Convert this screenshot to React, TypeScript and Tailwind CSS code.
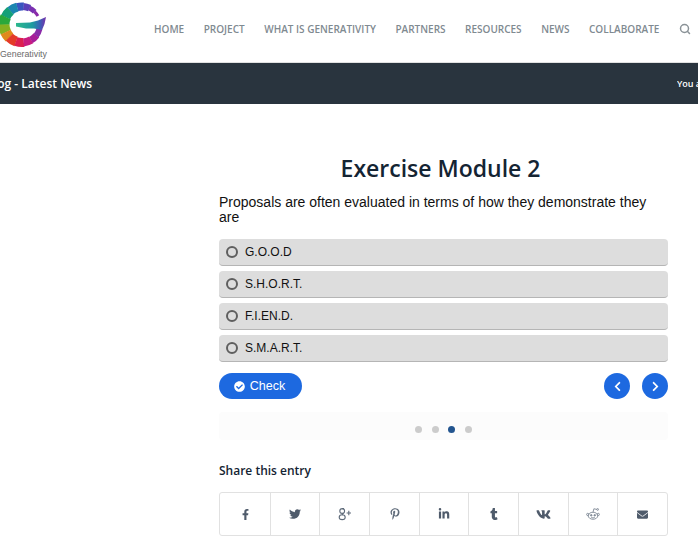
import { FaFacebookF, FaTwitter, FaPinterestP, FaLinkedinIn, FaTumblr, FaVk, FaEnvelope, FaCheckCircle, FaChevronLeft, FaChevronRight } from "react-icons/fa";
import { Search } from "lucide-react";

const nav = ["HOME", "PROJECT", "WHAT IS GENERATIVITY", "PARTNERS", "RESOURCES", "NEWS", "COLLABORATE"];
const options = ["G.O.O.D", "S.H.O.R.T.", "F.I.EN.D.", "S.M.A.R.T."];

const ringStops: [number, number, string, number][] = [
  [-28, -45, "#8a2aa8", 3],
  [-45, -65, "#7a30b0", 5],
  [-65, -85, "#5a40b8", 7],
  [-85, -105, "#3a55c0", 8],
  [-105, -130, "#1c86b0", 9],
  [-130, -155, "#14a078", 10],
  [-155, -180, "#2aa83c", 11],
  [-180, -205, "#86b020", 11],
  [-205, -225, "#e08a1c", 11],
  [-225, -250, "#e43a28", 10],
  [-250, -275, "#dc2050", 9],
  [-275, -300, "#c81c80", 8],
  [-300, -322, "#a81c98", 7],
  [-322, -345, "#8a2aa8", 6],
];

function Logo() {
  const arc = (r: number, a0: number, a1: number) => {
    const p = (a: number) => [22 + r * Math.cos((a * Math.PI) / 180), 24.5 + r * Math.sin((a * Math.PI) / 180)];
    const [x0, y0] = p(a0);
    const [x1, y1] = p(a1);
    return `M${x0} ${y0}A${r} ${r} 0 0 0 ${x1} ${y1}`;
  };
  return (
    <svg width="48" height="49" viewBox="0 0 48 49" className="shrink-0">
      <defs>
        <linearGradient id="arm" x1="0" y1="0" x2="1" y2="0">
          <stop offset="0" stopColor="#2cb88c" />
          <stop offset="0.55" stopColor="#1c9aa0" />
          <stop offset="0.8" stopColor="#3a60b8" />
          <stop offset="1" stopColor="#7a30a8" />
        </linearGradient>
      </defs>
      {ringStops.map(([a0, a1, c, w]) => (
        <path key={a0} d={arc(18, a0, a1 - 1)} stroke={c} strokeWidth={w} fill="none" />
      ))}
      <path d="M16 23 L30 22.5 L38 20.5 L46 17 L44.5 24 L42 30 L34 28.5 L26 28.5 L16 26.5 Z" fill="url(#arm)" />
    </svg>
  );
}

function Reddit() {
  return (
    <svg width="14" height="14" viewBox="0 0 16 16" fill="none" stroke="#7d8794" strokeWidth="1">
      <ellipse cx="8" cy="10" rx="5.5" ry="4" />
      <circle cx="2" cy="8.5" r="1.3" />
      <circle cx="14" cy="8.5" r="1.3" />
      <circle cx="6" cy="9.5" r="0.9" fill="#7d8794" />
      <circle cx="10" cy="9.5" r="0.9" fill="#7d8794" />
      <path d="M8 6 L9 2 L12.5 2.8" />
      <circle cx="13.3" cy="2.8" r="1" />
      <path d="M6 12 Q8 13 10 12" />
    </svg>
  );
}

function GooglePlus() {
  return (
    <svg width="14" height="14" viewBox="0 0 14 14" fill="none" stroke="#5f6b7a" strokeWidth="1.1">
      <circle cx="4.2" cy="4" r="2.4" />
      <ellipse cx="4.2" cy="10.2" rx="3" ry="2.4" />
      <path d="M5.6 6.2 Q3.4 7.4 4.8 8" />
      <path d="M6 1.6 H4" />
      <path d="M8.6 6 H13 M10.8 3.8 V8.2" />
    </svg>
  );
}

const share = [
  { icon: <FaFacebookF size={11} />, w: "w-[51px]" },
  { icon: <FaTwitter size={12} />, w: "w-[49px]" },
  { icon: <GooglePlus />, w: "w-[50px]" },
  { icon: <FaPinterestP size={12} className="text-[#5f6b7a]" />, w: "w-[50px]" },
  { icon: <FaLinkedinIn size={12} />, w: "w-[49px]" },
  { icon: <FaTumblr size={12} />, w: "w-[50px]" },
  { icon: <FaVk size={15} />, w: "w-[50px]" },
  { icon: <Reddit />, w: "w-[49px]" },
  { icon: <FaEnvelope size={11} />, w: "flex-1" },
];

export default function App() {
  return (
    <div className="h-[551px] w-[698px] overflow-hidden bg-white font-['Open_Sans',sans-serif]">
      <header className="flex h-[63px] items-start border-b border-[#e1e1e1] bg-white">
        <div className="flex w-[60px] flex-col items-start">
          <Logo />
          <span className="mt-[-1px] font-['Liberation_Sans',sans-serif] text-[8.8px] leading-[12px] text-[#6a6a6a]">Generativity</span>
        </div>
        <nav className="ml-[94px] mt-[22px] flex items-center gap-[19.5px] text-[10px] leading-[14px] font-semibold text-[#7f8a91]">
          {nav.map((n) => (
            <span key={n} className="whitespace-nowrap">{n}</span>
          ))}
          <Search size={12} strokeWidth={3} className="text-[#8a9297]" />
        </nav>
      </header>
      <div className="flex h-[41px] items-center justify-between overflow-hidden bg-[#29343e] text-white">
        <span className="-ml-[14px] text-[12px] font-semibold whitespace-nowrap">Blog - Latest News</span>
        <span className="-mr-[30px] w-[51px] overflow-hidden text-[9px] font-semibold whitespace-nowrap">You are here</span>
      </div>
      <main className="ml-[219px] w-[449px] pt-[49px]">
        <h1 className="pr-[6px] text-center text-[23px] leading-[30px] font-semibold text-[#142433]">Exercise Module 2</h1>
        <p className="mt-[12px] font-['Liberation_Sans',sans-serif] text-[14px] leading-[14.5px] text-[#111]">
          Proposals are often evaluated in terms of how they demonstrate they are
        </p>
        <div className="mt-[15px] flex flex-col gap-[5px] font-['Liberation_Sans',sans-serif]">
          {options.map((o) => (
            <div key={o} className="flex h-[27px] items-center gap-[7px] rounded-[4px] border-b border-[#b5b5b5] bg-[#dddddd] pl-[7px] text-[12px] text-[#111]">
              <span className="h-[12px] w-[12px] rounded-full border-2 border-[#5f5f5f]" />
              {o}
            </div>
          ))}
        </div>
        <div className="mt-[11px] flex items-center justify-between">
          <button className="flex h-[26px] w-[83px] items-center justify-center gap-[5px] rounded-full bg-[#1d69e0] pr-[2px] font-['Liberation_Sans',sans-serif] text-[12.5px] text-white">
            <FaCheckCircle size={11} />
            Check
          </button>
          <div className="flex gap-[12px]">
            <button className="flex h-[26px] w-[26px] items-center justify-center rounded-full bg-[#1d69e0] text-white"><FaChevronLeft size={11} /></button>
            <button className="flex h-[26px] w-[26px] items-center justify-center rounded-full bg-[#1d69e0] text-white"><FaChevronRight size={11} /></button>
          </div>
        </div>
        <div className="mt-[13px] flex h-[28px] items-center justify-center gap-[9.5px] rounded-[4px] bg-[#fcfcfc] pt-[6px]">
          <span className="h-[7px] w-[7px] rounded-full bg-[#cccccc]" />
          <span className="h-[7px] w-[7px] rounded-full bg-[#cccccc]" />
          <span className="h-[7px] w-[7px] rounded-full bg-[#23558f]" />
          <span className="h-[7px] w-[7px] rounded-full bg-[#cccccc]" />
        </div>
        <h2 className="mt-[22px] text-[12px] leading-[18px] font-semibold text-[#142433]">Share this entry</h2>
        <div className="mt-[12px] flex h-[44px] rounded-[3px] border border-[#e1e1e1] text-[#4f5b6b]">
          {share.map((s, i) => (
            <div key={i} className={`flex items-center justify-center ${s.w} ${i < share.length - 1 ? "border-r border-[#e1e1e1]" : ""}`}>
              {s.icon}
            </div>
          ))}
        </div>
      </main>
    </div>
  );
}
